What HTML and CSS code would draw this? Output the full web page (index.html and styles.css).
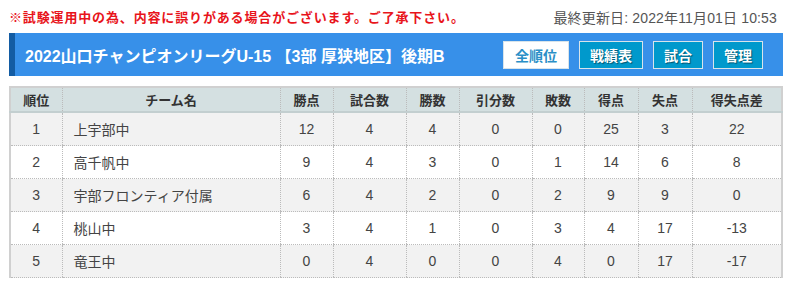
FILE: index.html
```html
<!DOCTYPE html>
<html lang="ja">
<head>
<meta charset="utf-8">
<link rel="stylesheet" href="styles.css">
</head>
<body>
<div class="page">
  <div class="topline">
    <p class="notice">※試験運用中の為、内容に誤りがある場合がございます。ご了承下さい。</p>
    <p class="updated">最終更新日: 2022年11月01日 10:53</p>
  </div>
  <div class="titlebar">
    <h1 class="title">2022山口チャンピオンリーグU-15 【3部 厚狭地区】後期B</h1>
    <nav class="tabs">
      <a class="tab active">全順位</a>
      <a class="tab">戦績表</a>
      <a class="tab">試合</a>
      <a class="tab">管理</a>
    </nav>
  </div>
  <table class="standings">
    <colgroup>
      <col class="c-rank"><col class="c-team"><col class="c-pts"><col class="c-gp"><col class="c-w"><col class="c-d"><col class="c-l"><col class="c-gf"><col class="c-ga"><col class="c-gd">
    </colgroup>
    <thead>
      <tr><th>順位</th><th>チーム名</th><th>勝点</th><th>試合数</th><th>勝数</th><th>引分数</th><th>敗数</th><th>得点</th><th>失点</th><th>得失点差</th></tr>
    </thead>
    <tbody>
      <tr><td>1</td><td class="team">上宇部中</td><td>12</td><td>4</td><td>4</td><td>0</td><td>0</td><td>25</td><td>3</td><td>22</td></tr>
      <tr><td>2</td><td class="team">高千帆中</td><td>9</td><td>4</td><td>3</td><td>0</td><td>1</td><td>14</td><td>6</td><td>8</td></tr>
      <tr><td>3</td><td class="team">宇部フロンティア付属</td><td>6</td><td>4</td><td>2</td><td>0</td><td>2</td><td>9</td><td>9</td><td>0</td></tr>
      <tr><td>4</td><td class="team">桃山中</td><td>3</td><td>4</td><td>1</td><td>0</td><td>3</td><td>4</td><td>17</td><td>-13</td></tr>
      <tr><td>5</td><td class="team">竜王中</td><td>0</td><td>4</td><td>0</td><td>0</td><td>4</td><td>0</td><td>17</td><td>-17</td></tr>
    </tbody>
  </table>
</div>
</body>
</html>
```

FILE: styles.css
```css
html, body {
  margin: 0;
  padding: 0;
  background: #fff;
}
body {
  font-family: "Liberation Sans", "Noto Sans CJK JP", sans-serif;
  color: #333;
}
.page {
  width: 774px;
  margin-left: 9px;
}
.topline {
  display: flex;
  justify-content: space-between;
  align-items: center;
  height: 33px;
}
.notice {
  margin: 0;
  color: #e8141b;
  font-weight: bold;
  font-size: 13px;
  letter-spacing: 0.85px;
}
.updated {
  margin: 0 6px 0 0;
  color: #555;
  font-size: 14px;
  letter-spacing: 0.15px;
}
.titlebar {
  display: flex;
  align-items: center;
  justify-content: space-between;
  height: 43px;
  background: #3790e9;
  border-left: 6px solid #135ca3;
  box-sizing: border-box;
  padding: 0 20px 0 10px;
}
.title {
  margin: 0;
  color: #fff;
  font-size: 16px;
  font-weight: bold;
}
.tabs {
  display: flex;
  gap: 10px;
}
.tab {
  display: flex;
  align-items: center;
  justify-content: center;
  box-sizing: border-box;
  height: 28px;
  padding: 0 10px;
  background: #0099cc;
  border: 1px solid #d8e4ea;
  color: #fff;
  font-size: 14px;
  font-weight: bold;
  text-shadow: 1px 1px 1px rgba(0,0,0,0.45);
}
.tab.active {
  background: #fff;
  color: #2a8fc7;
  text-shadow: none;
  padding: 0 11px;
}
.standings {
  margin-top: 10px;
  width: 774px;
  border-collapse: collapse;
  table-layout: fixed;
  font-size: 14px;
  border-left: 2px solid #d0d0d0;
  border-right: 2px solid #d0d0d0;
  border-top: 2px solid #d0d0d0;
}
.c-rank { width: 52px; }
.c-team { width: 218px; }
.c-pts { width: 53px; }
.c-gp { width: 73px; }
.c-w { width: 53px; }
.c-d { width: 73px; }
.c-l { width: 52px; }
.c-gf { width: 54px; }
.c-ga { width: 54px; }
.c-gd { width: 90px; }
.standings th {
  background: #d4e0e1;
  height: 23px;
  font-size: 13px;
  font-weight: bold;
  color: #333;
  border-left: 1px dotted #bbb;
  border-bottom: 2px solid #c3cfd0;
  padding: 0;
}
.standings td {
  height: 32px;
  padding: 0;
  text-align: center;
  color: #444;
  border-left: 1px dotted #bbb;
  border-bottom: 1px dotted #bbb;
}
.standings th:first-child, .standings td:first-child {
  border-left: none;
}
.standings td.team {
  text-align: left;
  padding-left: 11px;
}
.standings tbody tr:nth-child(odd) {
  background: #f2f2f2;
}
.standings tbody tr:nth-child(even) {
  background: #fff;
}
```
